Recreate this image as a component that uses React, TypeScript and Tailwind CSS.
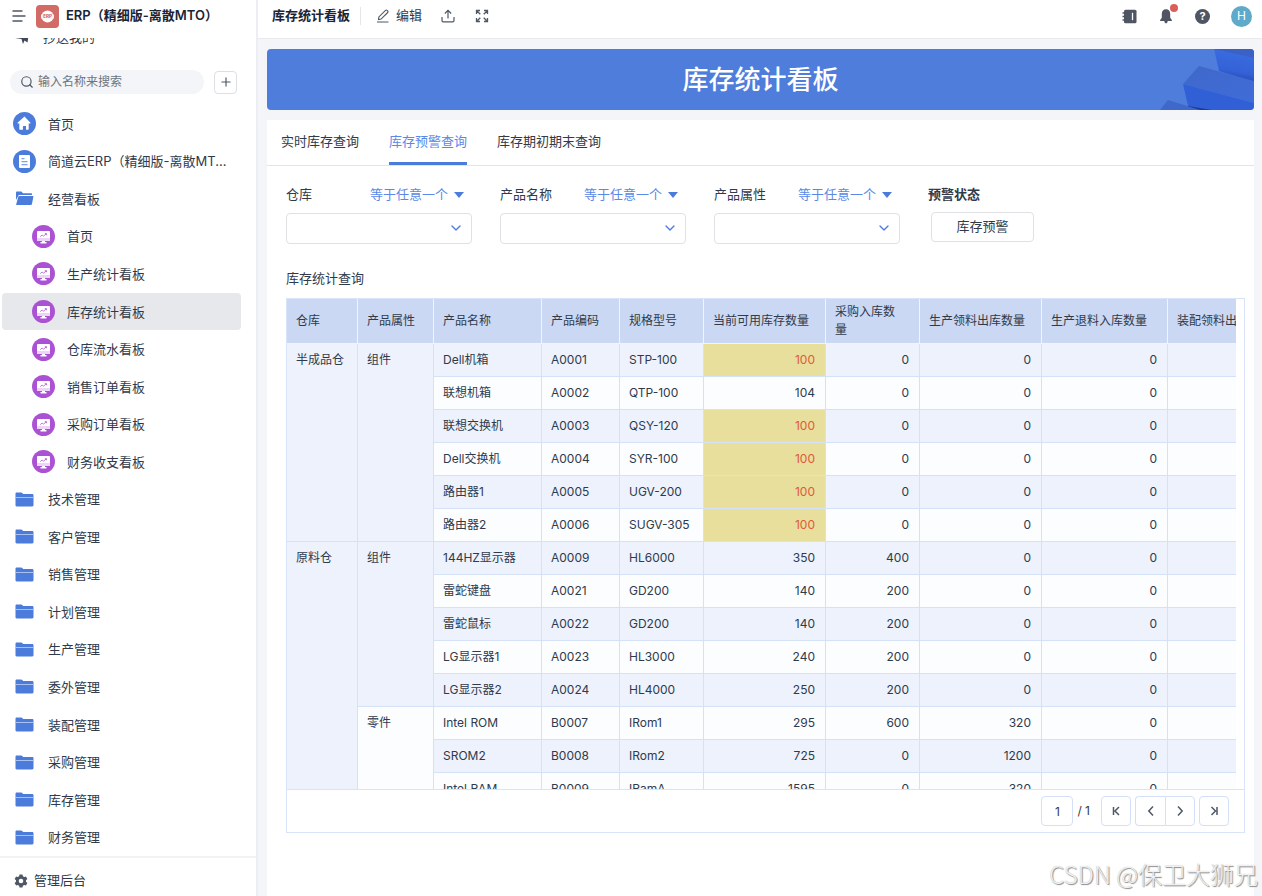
import { useState } from "react";
import type { ReactNode } from "react";
import { ChevronDown, Plus, Search } from "lucide-react";

type NavItem = { label: string; icon: "home" | "doc" | "open" | "folder" | "board" };

const navItems: NavItem[] = [
  { label: "首页", icon: "home" },
  { label: "简道云ERP（精细版-离散MTO）", icon: "doc" },
  { label: "经营看板", icon: "open" },
  { label: "首页", icon: "board" },
  { label: "生产统计看板", icon: "board" },
  { label: "库存统计看板", icon: "board" },
  { label: "仓库流水看板", icon: "board" },
  { label: "销售订单看板", icon: "board" },
  { label: "采购订单看板", icon: "board" },
  { label: "财务收支看板", icon: "board" },
  { label: "技术管理", icon: "folder" },
  { label: "客户管理", icon: "folder" },
  { label: "销售管理", icon: "folder" },
  { label: "计划管理", icon: "folder" },
  { label: "生产管理", icon: "folder" },
  { label: "委外管理", icon: "folder" },
  { label: "装配管理", icon: "folder" },
  { label: "采购管理", icon: "folder" },
  { label: "库存管理", icon: "folder" },
  { label: "财务管理", icon: "folder" },
];

const tabs = ["实时库存查询", "库存预警查询", "库存期初期末查询"];
const filters = ["仓库", "产品名称", "产品属性"];

const columns = [
  "仓库",
  "产品属性",
  "产品名称",
  "产品编码",
  "规格型号",
  "当前可用库存数量",
  "采购入库数量",
  "生产领料出库数量",
  "生产退料入库数量",
  "装配领料出库数量",
];

type Row = {
  warehouse?: [string, number];
  kind?: [string, number];
  name: string;
  code: string;
  spec: string;
  stock: number;
  bought: number;
  used: number;
};

// warehouse and kind carry the row span of the merged cell they open
const rows: Row[] = [
  { warehouse: ["半成品仓", 6], kind: ["组件", 6], name: "Dell机箱", code: "A0001", spec: "STP-100", stock: 100, bought: 0, used: 0 },
  { name: "联想机箱", code: "A0002", spec: "QTP-100", stock: 104, bought: 0, used: 0 },
  { name: "联想交换机", code: "A0003", spec: "QSY-120", stock: 100, bought: 0, used: 0 },
  { name: "Dell交换机", code: "A0004", spec: "SYR-100", stock: 100, bought: 0, used: 0 },
  { name: "路由器1", code: "A0005", spec: "UGV-200", stock: 100, bought: 0, used: 0 },
  { name: "路由器2", code: "A0006", spec: "SUGV-305", stock: 100, bought: 0, used: 0 },
  { warehouse: ["原料仓", 8], kind: ["组件", 5], name: "144HZ显示器", code: "A0009", spec: "HL6000", stock: 350, bought: 400, used: 0 },
  { name: "雷蛇键盘", code: "A0021", spec: "GD200", stock: 140, bought: 200, used: 0 },
  { name: "雷蛇鼠标", code: "A0022", spec: "GD200", stock: 140, bought: 200, used: 0 },
  { name: "LG显示器1", code: "A0023", spec: "HL3000", stock: 240, bought: 200, used: 0 },
  { name: "LG显示器2", code: "A0024", spec: "HL4000", stock: 250, bought: 200, used: 0 },
  { kind: ["零件", 3], name: "Intel ROM", code: "B0007", spec: "IRom1", stock: 295, bought: 600, used: 320 },
  { name: "SROM2", code: "B0008", spec: "IRom2", stock: 725, bought: 0, used: 1200 },
  { name: "Intel RAM", code: "B0009", spec: "IRamA", stock: 1595, bought: 0, used: 320 },
];

function NavIcon({ icon }: { icon: NavItem["icon"] }) {
  if (icon === "home") {
    return (
      <svg className="h-[23px] w-[23px]" viewBox="0 0 23 23">
        <circle cx="11.5" cy="11.5" r="11.5" fill="#4c7cdb" />
        <path d="M11.5 4.6 4.8 10.6c-.5.5-.3 1 .3 1h1.200v5.200c0 .6.4 1 1 1h2.600v-3.600h1.200v3.600h3.600c.6 0 1-.4 1-1v-5.200h1.200c.6 0 .8-.5.3-1z" fill="#fff" />
        <path d="M10.2 14h2.800v4h-2.800z" fill="#4c7cdb" />
      </svg>
    );
  }
  if (icon === "doc") {
    return (
      <svg className="h-[23px] w-[23px]" viewBox="0 0 23 23">
        <circle cx="11.5" cy="11.5" r="11.5" fill="#4c7cdb" />
        <rect x="6" y="5" width="11" height="13" rx="1" fill="#fff" />
        <path d="M8.500 8.700h3M8.500 11.700h6M8.500 14.700h6" stroke="#7ea0e6" strokeWidth="1.200" />
      </svg>
    );
  }
  if (icon === "board") {
    return (
      <svg className="h-[23px] w-[23px]" viewBox="0 0 23 23">
        <circle cx="11.5" cy="11.5" r="11.5" fill="#ab52d4" />
        <rect x="5" y="6" width="13" height="10" rx="1" fill="#fff" />
        <path d="M5 13h13v2a1 1 0 0 1-1 1H6a1 1 0 0 1-1-1z" fill="#ecd5f6" />
        <path d="M10 16h3v1h-3zM8.500 17h6v1.500h-6z" fill="#fff" />
        <path d="m8.200 11.600 1.900-1.500 1.500 1 2.600-2.200M12.800 8.600h1.700v1.600" fill="none" stroke="#bd78de" strokeWidth="1" />
      </svg>
    );
  }
  if (icon === "open") {
    return (
      <svg className="h-[15px] w-[19px]" viewBox="0 0 19 15">
        <path d="M1 1.600C1 .9 1.500.5 2 .5h4.500l1.500 1.700h8c.6 0 1 .4 1 1V4H3.800L1 9z" fill="#4c7cdb" />
        <path d="M4.300 5h13.500c.5 0 .7.3.6.8l-1.500 7.400c-.1.6-.5.8-1 .8H1.800c-.5 0-.8-.3-.6-.8l2-7.300c.1-.5.5-.9 1.100-.9z" fill="#4c7cdb" />
      </svg>
    );
  }
  return (
    <svg className="h-[15px] w-[19px]" viewBox="0 0 19 15">
      <path d="M.5 1.700C.5 1 1 .5 1.700.5h4.500c.5 0 .9.3 1.300.7l.7.800h9c.7 0 1.300.5 1.300 1.200v10.100c0 .7-.5 1.200-1.200 1.200H1.700c-.7 0-1.200-.5-1.200-1.200z" fill="#4c7cdb" />
      <path d="M.5 5h18v.9H.5z" fill="#b5c9f1" />
    </svg>
  );
}

function Sidebar() {
  const [active, setActive] = useState(5);

  return (
    <aside className="flex w-[258px] shrink-0 flex-col border-r-2 border-[#eceef3] bg-white">
      <div className="flex h-8 shrink-0 items-center pl-3">
        <button aria-label="菜单">
          <svg className="h-3.5 w-3.5" viewBox="0 0 14 14" fill="none" stroke="#4f5866" strokeWidth="1.500">
            <path d="M.5 2h10M.5 7h13M.5 12h10" />
          </svg>
        </button>
        <svg className="ml-2.5 h-[23px] w-[23px]" viewBox="0 0 23 23">
          <rect width="23" height="23" rx="4" fill="#d26a65" />
          <circle cx="11.500" cy="11.500" r="6" fill="#fff" />
          <rect x="5" y="9.500" width="13" height="4" fill="#fbeeee" />
          <text x="11.500" y="13.200" textAnchor="middle" fontSize="4.500" fontWeight="700" fill="#cf5f5a">ERP</text>
        </svg>
        <h1 className="ml-[7px] text-[13px] font-semibold whitespace-nowrap text-[#1b2435]">ERP（精细版-离散MTO）</h1>
      </div>

      {/* last row of the shortcut list, scrolled under the title */}
      <a href="#cc" className="mt-1.5 flex h-[9px] shrink-0 items-end gap-3 overflow-hidden pl-[15px]">
        <svg className="h-5 w-4 shrink-0" viewBox="0 0 16 20" fill="#3f4856">
          <path d="M0 11 14 5l-1.500 10.500-3-2-1.500 3.500-1.500-5z" />
        </svg>
        <span className="text-[13px] leading-5">抄送我的</span>
      </a>

      <div className="mt-[23px] flex shrink-0 items-center gap-2.5 pr-[19px] pl-2.5">
        <label className="flex h-6 min-w-0 flex-1 items-center gap-1 rounded-full bg-[#f4f5f8] px-2.5">
          <Search className="h-3.5 w-3.5 shrink-0 text-[#4f5866]" />
          <input
            aria-label="搜索"
            placeholder="输入名称来搜索"
            className="w-full min-w-0 bg-transparent text-[12px] outline-none placeholder:text-[#6c7480]"
          />
        </label>
        <button aria-label="新建" className="flex h-[23px] w-[23px] items-center justify-center rounded-sm border border-[#dcdfe4]">
          <Plus className="h-3.5 w-3.5 text-[#4f5866]" />
        </button>
      </div>

      <nav className="mt-[11px] flex min-h-0 flex-1 flex-col pr-[15px] pl-0.5">
        {navItems.map((item, i) => (
          <button
            key={i}
            onClick={() => setActive(i)}
            className={`flex min-h-0 flex-1 items-center gap-3 rounded text-left ${item.icon === "board" ? "pl-[30px]" : "pl-[11px]"} ${i === active ? "bg-[#e7e8ec]" : ""}`}
          >
            <span className="flex w-[23px] shrink-0 justify-center">
              <NavIcon icon={item.icon} />
            </span>
            <span className="truncate pr-2 text-[13px] leading-5">{item.label}</span>
          </button>
        ))}
      </nav>

      <a href="#admin" className="flex h-10 shrink-0 items-center gap-1.5 border-t-2 border-[#f1f2f4] pt-2 pl-3.5">
        <svg className="h-3.5 w-3.5" viewBox="0 0 14 14" fill="#4f5866" fillRule="evenodd">
          <path d="M5.500.5h3l.4 1.800 1.300.7 1.700-.6 1.500 2.600L12 6.300v1.400L13.400 9l-1.500 2.600-1.700-.6-1.300.7-.4 1.800h-3l-.4-1.800L3.800 11l-1.700.6L.6 9 2 7.700V6.300L.6 5l1.500-2.600L3.800 3l1.300-.7zM7 4.700a2.300 2.300 0 1 0 0 4.600 2.300 2.300 0 0 0 0-4.600z" />
        </svg>
        <span className="text-[13px]">管理后台</span>
      </a>
    </aside>
  );
}

function TopBar() {
  return (
    <header className="flex h-[39px] shrink-0 items-center border-b border-[#e8eaee] bg-white pr-2.5 pb-1.5 pl-3.5">
      <span className="text-[13px] font-semibold text-[#1b2435]">库存统计看板</span>
      <span className="ml-2.5 h-[18px] w-px bg-[#e3e5e9]" />
      <button className="ml-[15px] flex items-center gap-1.5 text-[13px]">
        <svg className="h-3.5 w-3.5" viewBox="0 0 14 14" fill="none" stroke="#4f5866" strokeWidth="1.100">
          <path d="M1 13h11.500M2.500 10.500l.4-2.600 6.600-6.600c.5-.5 1-.5 1.500 0l.7.700c.5.5.5 1 0 1.500L5.100 10.100z" />
        </svg>
        编辑
      </button>
      <button aria-label="分享" className="ml-[19px]">
        <svg className="h-3.5 w-3.5" viewBox="0 0 14 14" fill="none" stroke="#4f5866" strokeWidth="1.200">
          <path d="M7 9.500V1.500M3.800 4.500 7 1.300l3.200 3.200M1 8v3.500c0 .8.500 1.300 1.300 1.300h9.400c.8 0 1.300-.5 1.300-1.300V8" />
        </svg>
      </button>
      <button aria-label="全屏" className="ml-5">
        <svg className="h-3.5 w-3.5" viewBox="0 0 14 14" fill="none" stroke="#4f5866" strokeWidth="1.300">
          <path d="M1.500 5V1.500H5M1.700 1.700l3.600 3.600M9 1.500h3.500V5M12.300 1.700 8.700 5.300M12.500 9v3.500H9M12.300 12.300 8.700 8.700M5 12.500H1.500V9M1.700 12.300l3.600-3.600" />
        </svg>
      </button>

      <div className="ml-auto flex items-center gap-[21px]">
        <button aria-label="通讯录">
          <svg className="h-[15px] w-[15px]" viewBox="0 0 15 15">
            <rect x="2" y=".8" width="12.500" height="13.400" rx="1.500" fill="#4f5562" />
            <path d="M.5 4h3M.5 7.500h3M.5 11h3" stroke="#4f5562" strokeWidth="1.300" />
            <path d="M10.500 3.800v7.400" stroke="#fff" strokeWidth="1.300" />
          </svg>
        </button>
        <button aria-label="消息" className="relative">
          <svg className="h-4 w-4" viewBox="0 0 16 16" fill="#4f5562">
            <path d="M8 1.300c-2.600 0-4.200 1.900-4.200 4.400v4L2.200 12c-.3.500-.1 1 .5 1h10.600c.6 0 .8-.5.5-1l-1.600-2.300v-4c0-2.500-1.600-4.400-4.200-4.400zM6.300 13h3.400c-.2 1.500-.8 2.300-1.700 2.300s-1.500-.8-1.700-2.300z" />
          </svg>
          <span className="absolute -top-1 -right-1 h-2 w-2 rounded-full bg-[#d9605a]" />
        </button>
        <button aria-label="帮助" className="flex h-[15px] w-[15px] items-center justify-center rounded-full bg-[#4f5562] text-[11px] font-bold text-white">
          ?
        </button>
        <button aria-label="账号" className="flex h-[21px] w-[21px] items-center justify-center rounded-full bg-[#5fa9cb] text-[12px] text-white">
          H
        </button>
      </div>
    </header>
  );
}

function Banner() {
  return (
    <div className="relative flex h-[61px] shrink-0 items-center justify-center overflow-hidden rounded bg-[#4e7ddb]">
      <svg className="absolute right-0 bottom-0 h-[61px] w-[94px]" viewBox="0 0 94 61">
        <defs>
          <linearGradient id="back" x1="0" y1="0" x2="-0.200" y2="1">
            <stop offset="0" stopColor="#3a6be0" />
            <stop offset="0.550" stopColor="#3461d6" />
            <stop offset="1" stopColor="#1d3b9c" />
          </linearGradient>
          <linearGradient id="face" x1="0" y1="0" x2="1" y2="1">
            <stop offset="0" stopColor="#3f68c9" />
            <stop offset="1" stopColor="#3f6cd8" />
          </linearGradient>
        </defs>
        <path d="M54 0h40v33L59 22z" fill="url(#back)" />
        <path d="M54 0h40v9z" fill="#3a62c4" />
        <path d="M39 17 94 32v22L23 35z" fill="url(#face)" />
        <path d="M23 35 94 54v7H29z" fill="#3160d6" />
        <path d="M28 57 52 61H29z" fill="#1d3b9c" />
        <path d="M8 51 0 61h40z" fill="#3f68c9" />
      </svg>
      <h2 className="text-[26px] font-medium text-white">库存统计看板</h2>
    </div>
  );
}

function Filter({ label }: { label: string }) {
  return (
    <div className="w-[186px]">
      <div className="flex h-5 items-center justify-between pr-2">
        <label htmlFor={label} className="text-[13px]">
          {label}
        </label>
        <button className="flex items-center gap-1.5 text-[13px] text-[#5b88e6]">
          等于任意一个
          <svg className="h-1.5 w-2.5" viewBox="0 0 10 6" fill="#4c7cdb">
            <path d="M0 0h10L5 6z" />
          </svg>
        </button>
      </div>
      <div className="relative mt-2">
        <select id={label} className="h-[31px] w-full appearance-none rounded-sm border border-[#dfe1e5] bg-white px-2 text-[13px] outline-none">
          <option value=""></option>
        </select>
        <ChevronDown className="pointer-events-none absolute top-[7px] right-2 h-4 w-4 text-[#4c7cdb]" strokeWidth={2} />
      </div>
    </div>
  );
}

const cell = "border-r border-b border-[#d5e1f6] pr-2.5 pl-[9px] whitespace-nowrap";

function StockTable() {
  return (
    <table className="w-[1003px] table-fixed border-separate border-spacing-0 text-[12px]">
      <colgroup>
        <col className="w-[71px]" />
        <col className="w-[76px]" />
        <col className="w-[108px]" />
        <col className="w-[78px]" />
        <col className="w-[84px]" />
        <col className="w-[122px]" />
        <col className="w-[94px]" />
        <col className="w-[122px]" />
        <col className="w-[126px]" />
        <col className="w-[122px]" />
      </colgroup>
      <thead>
        <tr className="h-[45px] bg-[#cad8f3]">
          {columns.map((column) => (
            <th key={column} className="border-r border-b border-[#f0f5fd] pr-[15px] pl-[9px] text-left leading-[18px] font-normal">
              {column}
            </th>
          ))}
        </tr>
      </thead>
      <tbody>
        {rows.map((row, i) => (
          <tr key={row.code} className={`h-[33px] ${i % 2 === 0 ? "bg-[#edf2fc]" : "bg-[#fcfdff]"}`}>
            {row.warehouse && (
              <td rowSpan={row.warehouse[1]} className={`${cell} bg-[#edf2fc] pt-[7px] align-top`}>
                {row.warehouse[0]}
              </td>
            )}
            {row.kind && (
              <td rowSpan={row.kind[1]} className={`${cell} pt-[7px] align-top ${row.kind[0] === "零件" ? "bg-[#fcfdff]" : "bg-[#edf2fc]"}`}>
                {row.kind[0]}
              </td>
            )}
            <td className={cell}>{row.name}</td>
            <td className={cell}>{row.code}</td>
            <td className={cell}>{row.spec}</td>
            <td className={`${cell} text-right ${row.stock <= 100 ? "bg-[#e8df9c] text-[#e0593c]" : ""}`}>{row.stock}</td>
            <td className={`${cell} text-right`}>{row.bought}</td>
            <td className={`${cell} text-right`}>{row.used}</td>
            <td className={`${cell} text-right`}>0</td>
            <td className={cell} />
          </tr>
        ))}
      </tbody>
    </table>
  );
}

function PageButton({ label, path, className }: { label: string; path: string; className: string }) {
  return (
    <button aria-label={label} className={`flex h-[30px] w-[30px] items-center justify-center border border-[#d3e0f8] ${className}`}>
      <svg className="h-3 w-3" viewBox="0 0 12 12" fill="none" stroke="#4f5866" strokeWidth="1.500">
        <path d={path} />
      </svg>
    </button>
  );
}

function Panel({ children }: { children: ReactNode }) {
  return <section className="flex min-h-0 flex-1 flex-col bg-white">{children}</section>;
}

export default function App() {
  const [tab, setTab] = useState(1);

  return (
    <div className="relative flex h-screen overflow-hidden bg-[#f4f5f9] font-['Inter','Noto_Sans_CJK_SC',sans-serif] text-[#2f3a4b]">
      <Sidebar />

      <main className="flex min-w-0 flex-1 flex-col">
        <TopBar />

        <div className="flex min-h-0 flex-1 flex-col gap-2.5 pt-2.5 pr-2 pl-[9px]">
          <Banner />

          <Panel>
            <div role="tablist" className="flex h-[46px] shrink-0 gap-[30px] border-b border-[#e3e5e9] px-3.5">
              {tabs.map((name, i) => (
                <button
                  key={name}
                  role="tab"
                  aria-selected={tab === i}
                  onClick={() => setTab(i)}
                  className={`border-b-[3px] pt-0.5 text-[13px] ${tab === i ? "border-[#4c7cdb] text-[#5b88e6]" : "border-transparent"}`}
                >
                  {name}
                </button>
              ))}
            </div>

            <div className="flex shrink-0 gap-7 px-[19px] pt-[19px]">
              {filters.map((name) => (
                <Filter key={name} label={name} />
              ))}
              <div>
                <div className="flex h-5 items-center text-[13px] font-semibold">预警状态</div>
                <button className="mt-[7px] ml-[3px] h-[30px] w-[103px] rounded-sm border border-[#dfe1e5] text-[13px]">库存预警</button>
              </div>
            </div>

            <h3 className="mt-6 shrink-0 px-[19px] text-[13px] leading-5">库存统计查询</h3>

            <div className="mt-2.5 mr-[9px] mb-[63px] ml-[19px] flex min-h-0 flex-1 flex-col border border-[#d9e4f8]">
              <div className="min-h-0 flex-1 pr-2">
                <div className="h-full overflow-hidden">
                  <StockTable />
                </div>
              </div>
              <div className="flex h-[43px] shrink-0 items-center justify-end gap-1 border-t border-[#d9e4f8] pr-[15px] text-[12px]">
                <input
                  aria-label="页码"
                  defaultValue="1"
                  className="h-[30px] w-8 rounded-sm border border-[#d3e0f8] text-center outline-none"
                />
                <span className="mr-[7px] whitespace-nowrap">/ 1</span>
                <PageButton label="第一页" className="rounded-sm" path="M3.500 2v8M9 2 5 6l4 4" />
                <div className="flex">
                  <PageButton label="上一页" className="rounded-l-sm border-r-0" path="M8 1.500 3.800 6 8 10.500" />
                  <PageButton label="下一页" className="rounded-r-sm" path="M4 1.500 8.200 6 4 10.500" />
                </div>
                <PageButton label="最后一页" className="rounded-sm" path="M9 2v8M3.500 2l4 4-4 4" />
              </div>
            </div>
          </Panel>
        </div>
      </main>

      <div className="pointer-events-none absolute right-1 bottom-1 font-['Noto_Sans_CJK_SC',sans-serif] text-[24px] leading-9 font-light whitespace-nowrap text-[#f0f0f0] [text-shadow:1px_1px_1px_#888,0_0_1px_#bbb]">
        CSDN @保卫大狮兄
      </div>
    </div>
  );
}
